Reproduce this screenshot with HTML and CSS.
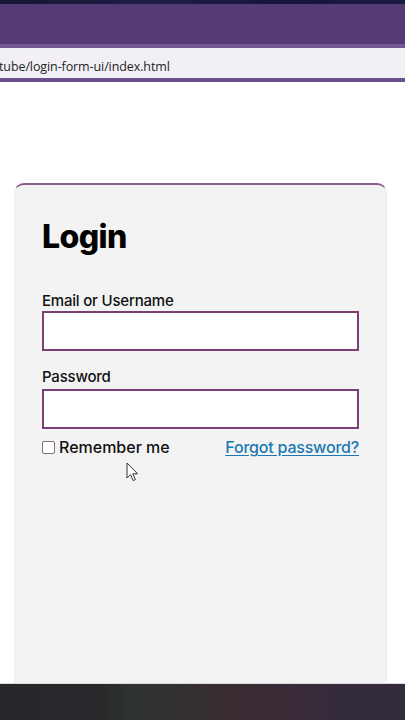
FILE: index.html
```html
<!DOCTYPE html>
<html lang="en">
<head>
<meta charset="utf-8">
<title>Login Form UI</title>
<link rel="stylesheet" href="styles.css">
</head>
<body>
<header class="browser">
  <div class="topstrip"></div>
  <div class="titlebar"></div>
  <div class="urlbar"><span class="url">tube/login-form-ui/index.html</span></div>
</header>
<main class="page">
  <form class="card">
    <h1 class="title">Login</h1>
    <label class="label" for="user">Email or Username</label>
    <input class="field" id="user" type="text">
    <label class="label label-2" for="pass">Password</label>
    <input class="field" id="pass" type="password">
    <div class="options">
      <label class="remember"><input class="check" type="checkbox"><span>Remember me</span></label>
      <a class="forgot" href="#">Forgot password?</a>
    </div>
    <svg class="cursor" width="13" height="21" viewBox="0 0 13 21" aria-hidden="true">
      <path d="M1 1 L1 16 L4.6 12.6 L7.2 18.6 L9.4 17.6 L6.8 11.8 L11.6 11.8 Z" fill="#fff" stroke="#333" stroke-width="1" stroke-linejoin="round"/>
    </svg>
  </form>
</main>
<footer class="taskbar"></footer>
</body>
</html>
```
FILE: styles.css
```css
* { box-sizing: border-box; }
html, body { margin: 0; padding: 0; }
body {
  width: 405px;
  height: 720px;
  overflow: hidden;
  background: #fff;
  font-family: Inter, "Noto Sans", sans-serif;
  display: flex;
  flex-direction: column;
}
.browser { flex: none; }
.topstrip {
  height: 4px;
  background: linear-gradient(90deg, #161733, #1d1e45 40%, #14163a 70%, #1c1b42);
}
.titlebar {
  height: 44px;
  background: #553a75;
  border-bottom: 4px solid #735896;
}
.urlbar {
  height: 34px;
  background: #f2f0f5;
  border-bottom: 4px solid #6b4f8f;
  display: flex;
  align-items: center;
  padding-top: 8px;
}
.url {
  font-family: "Open Sans", "Noto Sans", sans-serif;
  font-size: 12.5px;
  color: #1e1e1e;
  letter-spacing: -0.1px;
  margin-left: -1px;
  line-height: 22px;
}
.page {
  flex: 1;
  min-height: 0;
  padding: 101px 18px 0 14px;
  display: flex;
}
.card {
  position: relative;
  flex: 1;
  background: #f3f3f3;
  border-top: 2px solid #8c5d8a;
  border-left: 1px solid #ececec;
  border-right: 1px solid #ececec;
  border-radius: 10px 10px 0 0;
  padding: 32px 27px 0 27px;
  display: flex;
  flex-direction: column;
}
.title {
  margin: 0;
  font-size: 32px;
  line-height: 40px;
  font-weight: 800;
  color: #000;
  letter-spacing: -0.6px;
}
.label {
  margin-top: 34px;
  font-size: 15px;
  line-height: 20px;
  font-weight: 500;
  color: #111;
  letter-spacing: -0.2px;
}
.label-2 { margin-top: 16px; margin-bottom: 2px; }
.field {
  margin: 0;
  width: 317px;
  height: 40px;
  background: #fff;
  border: 2px solid #7b3f77;
  border-radius: 0;
  padding: 0 8px;
  font: inherit;
  outline: none;
}
.options {
  margin-top: 8px;
  width: 317px;
  display: flex;
  justify-content: space-between;
  align-items: center;
  height: 20px;
}
.remember {
  display: flex;
  align-items: center;
  gap: 4px;
  font-size: 16px;
  font-weight: 500;
  color: #111;
  letter-spacing: 0;
}
.check {
  appearance: none;
  -webkit-appearance: none;
  margin: 0;
  width: 13px;
  height: 13px;
  border: 1.5px solid #767676;
  border-radius: 2px;
  background: #fff;
}
.forgot {
  font-size: 16px;
  font-weight: 500;
  color: #1a78b4;
  text-decoration: underline;
  text-underline-offset: 2px;
  letter-spacing: -0.2px;
}
.cursor {
  position: absolute;
  left: 111px;
  top: 277px;
}
.taskbar {
  flex: none;
  height: 37px;
  border-top: 1px solid #dcdcdc;
  background: linear-gradient(90deg, #27262b 0%, #29292c 25%, #2f3431 33%, #333033 45%, #3a2c33 60%, #3a2c38 72%, #342b3c 85%, #332b3d 100%);
}
```
